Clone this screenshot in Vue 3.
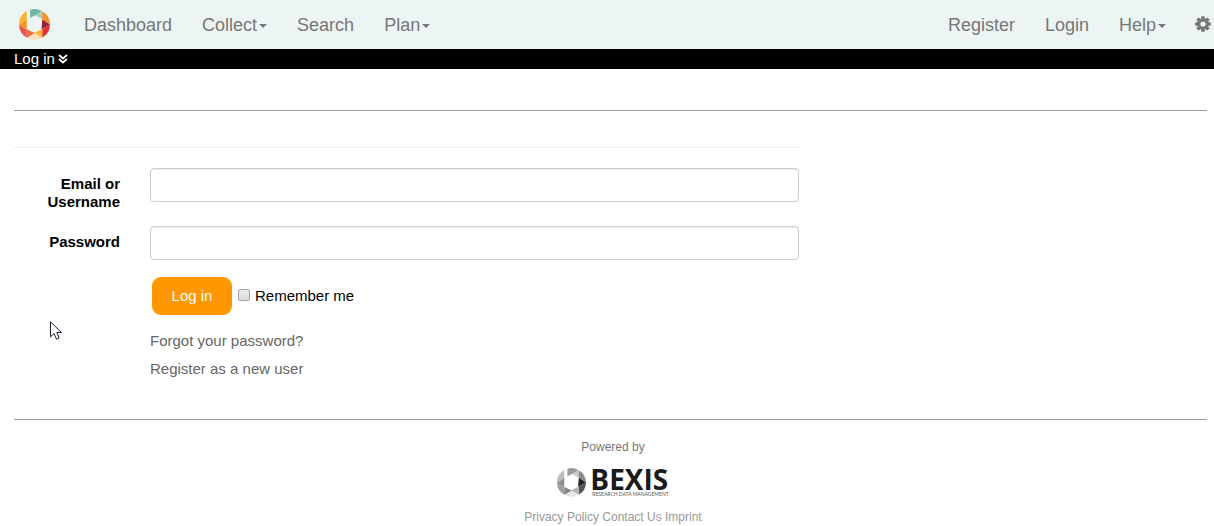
<script setup>
import { ref } from 'vue'

const username = ref('')
const password = ref('')
const remember = ref(false)

const mainLinks = [
  { label: 'Dashboard' },
  { label: 'Collect', menu: true },
  { label: 'Search' },
  { label: 'Plan', menu: true }
]
const userLinks = [
  { label: 'Register' },
  { label: 'Login' },
  { label: 'Help', menu: true }
]

// Facets of the aperture mark, drawn in a 92 x 92 box
const facets = [
  { d: 'M23 6V31L0 48A46 46 0 0 1 23 6Z', color: '#f7b432', gray: '#bdbdbd' },
  { d: 'M33 2A46 46 0 0 1 69 7L33 27Z', color: '#74b3a4', gray: '#9b9b9b' },
  { d: 'M69 7V30L47 19Z', color: '#9ed2bd', gray: '#c8c8c8' },
  { d: 'M69 7A46 46 0 0 1 92 46L69 31Z', color: '#f69324', gray: '#8b8b8b' },
  { d: 'M69 31L92 46L67 60Z', color: '#93263b', gray: '#252525' },
  { d: 'M92 46A46 46 0 0 1 69 85V59Z', color: '#e62e35', gray: '#555555' },
  { d: 'M69 59V85L45 71Z', color: '#f8b630', gray: '#b4b4b4' },
  { d: 'M46 71L69 85A46 46 0 0 1 23 85Z', color: '#fde0bd', gray: '#e6e6e6' },
  { d: 'M23 60L47 71L23 85Z', color: '#f0703a', gray: '#858585' },
  { d: 'M0 48L23 60V85A46 46 0 0 1 0 48Z', color: '#e85550', gray: '#a0a0a0' },
  { d: 'M23 31V60L0 48Z', color: '#f69324', gray: '#8d8d8d' }
]
</script>

<template>
  <div class="page">
    <header>
      <nav class="navbar" aria-label="Main">
        <a href="#" class="brand" aria-label="Home">
          <svg viewBox="0 0 92 92" width="31" height="31" aria-hidden="true">
            <path v-for="f in facets" :key="f.d" :d="f.d" :fill="f.color" />
          </svg>
        </a>
        <a v-for="l in mainLinks" :key="l.label" href="#" class="nav-link">{{ l.label }}<span v-if="l.menu" class="caret"></span></a>
        <span class="spacer"></span>
        <a v-for="l in userLinks" :key="l.label" href="#" class="nav-link">{{ l.label }}<span v-if="l.menu" class="caret"></span></a>
        <a href="#" class="settings" aria-label="Settings">
          <svg viewBox="0 0 16 16" width="16" height="16" aria-hidden="true">
            <g fill="#777">
              <rect v-for="a in [0, 45, 90, 135]" :key="a" x="6.2" y="0.2" width="3.6" height="15.6" rx="0.6" :transform="`rotate(${a} 8 8)`" />
              <circle cx="8" cy="8" r="5.8" />
            </g>
            <circle cx="8" cy="8" r="2.6" fill="#edf5f4" />
          </svg>
        </a>
      </nav>
      <div class="subbar">
        <span>Log in</span>
        <svg viewBox="0 0 10 10" width="10" height="10" aria-hidden="true">
          <path d="M1 1L5 4.5L9 1M1 5L5 8.5L9 5" fill="none" stroke="#fff" stroke-width="1.7" />
        </svg>
      </div>
    </header>

    <main>
      <form class="login" @submit.prevent>
        <div class="fields">
          <label class="field-label" for="username">Email or Username</label>
          <input id="username" v-model="username" class="text-box" type="text">
          <label class="field-label" for="password">Password</label>
          <input id="password" v-model="password" class="text-box" type="password">
          <div class="actions">
            <button type="submit">Log in</button>
            <input id="remember" v-model="remember" class="tick" type="checkbox">
            <label for="remember">Remember me</label>
          </div>
          <div class="help-links">
            <a href="#">Forgot your password?</a>
            <a href="#">Register as a new user</a>
          </div>
        </div>
      </form>
    </main>

    <footer>
      <span class="powered">Powered by</span>
      <a href="#" class="bexis" aria-label="BEXIS Research Data Management">
        <svg viewBox="0 0 92 92" width="29" height="29" aria-hidden="true">
          <path v-for="f in facets" :key="f.d" :d="f.d" :fill="f.gray" />
        </svg>
        <span class="wordmark">
          <span class="name">BEXIS</span>
          <span class="tagline">RESEARCH DATA MANAGEMENT</span>
        </span>
      </a>
      <div class="legal"><a href="#">Privacy Policy</a> <a href="#">Contact Us</a> <a href="#">Imprint</a></div>
    </footer>

    <svg class="pointer" viewBox="0 0 12 19" width="12" height="19" aria-hidden="true">
      <path d="M.5.8V15.8L4 12.5L6.5 18.2L9.2 17L6.8 11.4H11.4Z" fill="#fff" stroke="#1d1d33" />
    </svg>
  </div>
</template>

<style>
body {
  margin: 0;
  background: #fff;
}
</style>

<style scoped>
.page {
  position: relative;
  font: 15px/20px "Liberation Sans", Arial, sans-serif;
  color: #000;
}
* {
  box-sizing: border-box;
}
a {
  color: #666;
  text-decoration: none;
}
.navbar {
  display: flex;
  align-items: center;
  height: 49px;
  padding: 0 3px 0 19px;
  background: #edf5f4;
}
.brand {
  display: flex;
  margin-right: 19px;
}
.nav-link {
  padding: 0 15px;
  font-size: 18px;
  color: #777;
  white-space: nowrap;
}
.caret {
  display: inline-block;
  margin-left: 2px;
  border: 4px solid transparent;
  border-top-color: #777;
  border-bottom: 0;
  vertical-align: middle;
}
.spacer {
  flex: 1;
}
.settings {
  display: flex;
  margin: 0 0 2px 14px;
}
.subbar {
  display: flex;
  align-items: center;
  gap: 3px;
  height: 20px;
  padding-left: 14px;
  background: #000;
  color: #fff;
}
main {
  display: grid;
  grid-template-columns: 2fr 1fr;
  gap: 15px;
  margin: 41px 7px 0 14px;
  padding: 36px 0 40px;
  border-top: 1px solid #999;
  border-bottom: 1px solid #999;
}
.login {
  padding-top: 20px;
  border-top: 1px solid #eee;
}
.fields {
  display: grid;
  grid-template-columns: 106px 1fr;
  column-gap: 30px;
}
.field-label {
  padding-top: 7px;
  font-weight: bold;
  line-height: 18px;
  text-align: right;
}
.text-box {
  width: 100%;
  height: 34px;
  margin-bottom: 24px;
  padding: 6px 12px;
  border: 1px solid #ccc;
  border-radius: 4px;
  box-shadow: inset 0 1px 1px rgba(0, 0, 0, 0.075);
  font: inherit;
}
.actions {
  grid-column: 2;
  display: flex;
  align-items: center;
  margin: -7px 0 16px 2px;
}
button {
  width: 80px;
  height: 38px;
  padding: 0;
  border: 0;
  border-radius: 9px;
  background: #ff9800;
  color: #fff;
  font: inherit;
}
.tick {
  appearance: none;
  width: 12px;
  height: 12px;
  margin: 0 5px 3px 6px;
  border: 1px solid #a5a5a5;
  border-radius: 2px;
  background: linear-gradient(#e9e9e9, #dcdcdc);
}
.tick:checked {
  background: #666;
}
.help-links {
  grid-column: 2;
  display: flex;
  flex-direction: column;
  align-items: flex-start;
  gap: 8px;
}
footer {
  display: flex;
  flex-direction: column;
  align-items: center;
  padding: 17px 0 0 12px;
  font-size: 12px;
}
.powered {
  color: #777;
}
.bexis {
  display: flex;
  align-items: center;
  gap: 4px;
  margin: 10px 0;
}
.wordmark {
  display: flex;
  flex-direction: column;
  color: #1a1a1a;
  white-space: nowrap;
}
.name {
  font: 700 28px/24px "Open Sans", "Noto Sans", sans-serif;
}
.tagline {
  padding-left: 2px;
  font: 5px/6px Lato, sans-serif;
  color: #555;
}
.legal,
.legal a {
  color: #999;
}
.pointer {
  position: absolute;
  left: 50px;
  top: 321px;
}
</style>
